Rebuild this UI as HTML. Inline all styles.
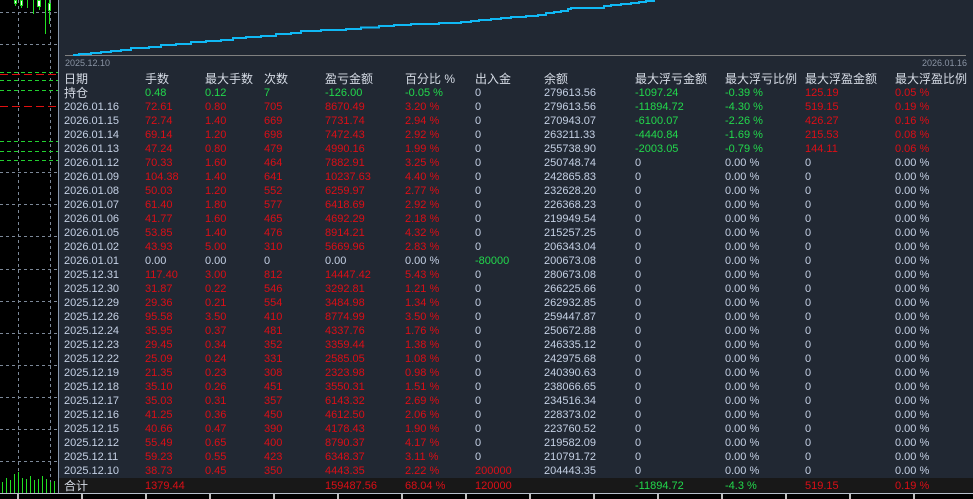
<!DOCTYPE html>
<html><head><meta charset="utf-8"><style>
*{margin:0;padding:0;box-sizing:border-box}
body{width:973px;height:499px;background:#000;position:relative;overflow:hidden;font-family:"Liberation Sans","Noto Sans CJK SC",sans-serif;font-size:11px}
#panel{position:absolute;left:58px;top:0;width:915px;height:493px;background:#212833;border-left:1px solid #8a98ac}
.r{position:absolute;left:0;width:915px;height:14px;line-height:14px;white-space:nowrap}
.r span{position:absolute;color:#dc0e16}
.r span:nth-child(1){left:5px;color:#c4d0e4}
.r span:nth-child(2){left:86px}
.r span:nth-child(3){left:146px}
.r span:nth-child(4){left:205px}
.r span:nth-child(5){left:266px}
.r span:nth-child(6){left:346px}
.r span:nth-child(7){left:416px;color:#c4d0e4}
.r span:nth-child(8){left:485px;color:#c4d0e4}
.r span:nth-child(9){left:576px;color:#c4d0e4}
.r span:nth-child(10){left:666px;color:#c4d0e4}
.r span:nth-child(11){left:746px;color:#c4d0e4}
.r span:nth-child(12){left:836px;color:#c4d0e4}
.r.h span{color:#d6dce6;font-size:12px}
.r span.gr{color:#22d84c}
.r span.rd{color:#dc0e16}
.r span.wt{color:#c4d0e4}
.r span.lb{color:#d6dce6;font-size:12px}
#tot{position:absolute;left:0;top:478px;width:915px;height:15px;background:#181818}
</style></head><body>
<svg width="58" height="499" style="position:absolute;left:0;top:0">
<g stroke="#7c8898" stroke-dasharray="3,3" stroke-width="1">
<line x1="18.5" y1="0" x2="18.5" y2="493"/><line x1="50.5" y1="0" x2="50.5" y2="493"/>
<line x1="0" y1="12.5" x2="58" y2="12.5"/><line x1="0" y1="44.5" x2="58" y2="44.5"/>
<line x1="0" y1="172.5" x2="58" y2="172.5"/><line x1="0" y1="204.5" x2="58" y2="204.5"/>
<line x1="0" y1="236.5" x2="58" y2="236.5"/><line x1="0" y1="269.5" x2="58" y2="269.5"/>
<line x1="0" y1="301.5" x2="58" y2="301.5"/><line x1="0" y1="333.5" x2="58" y2="333.5"/>
<line x1="0" y1="365.5" x2="58" y2="365.5"/><line x1="0" y1="397.5" x2="58" y2="397.5"/>
<line x1="0" y1="429.5" x2="58" y2="429.5"/><line x1="0" y1="461.5" x2="58" y2="461.5"/>
</g>
<g stroke="#22d030" stroke-dasharray="4,3">
<line x1="0" y1="72.5" x2="58" y2="72.5"/><line x1="0" y1="80.5" x2="58" y2="80.5"/>
<line x1="0" y1="90.5" x2="58" y2="90.5"/><line x1="0" y1="141.5" x2="58" y2="141.5"/>
<line x1="0" y1="151.5" x2="58" y2="151.5"/><line x1="0" y1="160.5" x2="58" y2="160.5"/>
</g>
<g stroke="#e01010" stroke-dasharray="8,4"><line x1="0" y1="74.5" x2="58" y2="74.5"/><line x1="0" y1="106.5" x2="58" y2="106.5"/></g>
<g stroke="#22e022"><line x1="2.5" y1="482" x2="2.5" y2="493"/><line x1="6.5" y1="478" x2="6.5" y2="493"/><line x1="10.5" y1="480" x2="10.5" y2="493"/><line x1="14.5" y1="474" x2="14.5" y2="493"/><line x1="18.5" y1="472" x2="18.5" y2="493"/><line x1="22.5" y1="478" x2="22.5" y2="493"/><line x1="26.5" y1="479" x2="26.5" y2="493"/><line x1="30.5" y1="476" x2="30.5" y2="493"/><line x1="34.5" y1="480" x2="34.5" y2="493"/><line x1="38.5" y1="479" x2="38.5" y2="493"/><line x1="42.5" y1="476" x2="42.5" y2="493"/><line x1="46.5" y1="479" x2="46.5" y2="493"/><line x1="50.5" y1="482" x2="50.5" y2="493"/><line x1="54.5" y1="481" x2="54.5" y2="493"/>
<line x1="15.5" y1="0" x2="15.5" y2="6"/><line x1="21.5" y1="0" x2="21.5" y2="8"/><line x1="27.5" y1="0" x2="27.5" y2="8"/><line x1="33.5" y1="0" x2="33.5" y2="14"/><line x1="39.5" y1="0" x2="39.5" y2="10"/><line x1="45.5" y1="0" x2="45.5" y2="34"/><line x1="49.5" y1="0" x2="49.5" y2="24"/></g>
<g fill="#fff" stroke="#22e022"><rect x="14.5" y="0.5" width="2" height="3"/><rect x="20.5" y="0.5" width="2" height="5"/><rect x="37.5" y="0.5" width="3" height="6"/><rect x="48.5" y="3.5" width="2" height="7"/></g>
</svg>
<div id="panel">
<svg width="915" height="70" style="position:absolute;left:0;top:0">
<line x1="6" y1="55.5" x2="907" y2="55.5" stroke="#808080"/>
<g transform="translate(-58,0)">
<polyline fill="none" stroke="#10b8f4" stroke-width="2" points="72,55 78,55 78,54 90,54 90,53 100,53 100,52 110,52 110,51 120,51 120,50 130,50 130,48 148,48 148,47 160,47 160,45 175,45 175,44 190,44 190,42 205,42 205,41 220,41 220,40 232,40 232,38 245,38 245,37 260,37 260,36 275,36 275,34 290,34 290,33 300,33 300,31 320,31 320,30 345,30 345,29 360,29 360,27.5 378,27.5 378,26 393,26 393,25 410,25 410,24 438,24 438,23 460,23 460,22 470,22 470,21 478,21 478,20 490,20 490,19 500,19 500,18 510,18 510,17 525,17 525,16 537,16 537,15 545,15 545,13 553,13 553,12 560,12 560,11 567,11 567,9 570,9 570,8 603,8 603,6 610,6 610,5 620,5 620,4 630,4 630,3 638,3 638,2 645,2 645,1 653,1 653,-1"/>
</g>
<text x="6" y="66" fill="#8a94a4" font-size="9" font-family="Liberation Sans">2025.12.10</text>
<text x="863" y="66" fill="#8a94a4" font-size="9" font-family="Liberation Sans">2026.01.16</text>
</svg>
<div class="r h" style="top:72px"><span>日期</span><span>手数</span><span>最大手数</span><span>次数</span><span>盈亏金额</span><span>百分比 %</span><span>出入金</span><span>余额</span><span>最大浮亏金额</span><span>最大浮亏比例</span><span>最大浮盈金额</span><span>最大浮盈比例</span></div>
<div class="r" style="top:86px"><span class="lb">持仓</span><span class="gr">0.48</span><span class="gr">0.12</span><span class="gr">7</span><span class="gr">-126.00</span><span class="gr">-0.05 %</span><span>0</span><span>279613.56</span><span class="gr">-1097.24</span><span class="gr">-0.39 %</span><span class="rd">125.19</span><span class="rd">0.05 %</span></div>
<div class="r" style="top:100px"><span>2026.01.16</span><span>72.61</span><span>0.80</span><span>705</span><span>8670.49</span><span>3.20 %</span><span>0</span><span>279613.56</span><span class="gr">-11894.72</span><span class="gr">-4.30 %</span><span class="rd">519.15</span><span class="rd">0.19 %</span></div>
<div class="r" style="top:114px"><span>2026.01.15</span><span>72.74</span><span>1.40</span><span>669</span><span>7731.74</span><span>2.94 %</span><span>0</span><span>270943.07</span><span class="gr">-6100.07</span><span class="gr">-2.26 %</span><span class="rd">426.27</span><span class="rd">0.16 %</span></div>
<div class="r" style="top:128px"><span>2026.01.14</span><span>69.14</span><span>1.20</span><span>698</span><span>7472.43</span><span>2.92 %</span><span>0</span><span>263211.33</span><span class="gr">-4440.84</span><span class="gr">-1.69 %</span><span class="rd">215.53</span><span class="rd">0.08 %</span></div>
<div class="r" style="top:142px"><span>2026.01.13</span><span>47.24</span><span>0.80</span><span>479</span><span>4990.16</span><span>1.99 %</span><span>0</span><span>255738.90</span><span class="gr">-2003.05</span><span class="gr">-0.79 %</span><span class="rd">144.11</span><span class="rd">0.06 %</span></div>
<div class="r" style="top:156px"><span>2026.01.12</span><span>70.33</span><span>1.60</span><span>464</span><span>7882.91</span><span>3.25 %</span><span>0</span><span>250748.74</span><span>0</span><span>0.00 %</span><span>0</span><span>0.00 %</span></div>
<div class="r" style="top:170px"><span>2026.01.09</span><span>104.38</span><span>1.40</span><span>641</span><span>10237.63</span><span>4.40 %</span><span>0</span><span>242865.83</span><span>0</span><span>0.00 %</span><span>0</span><span>0.00 %</span></div>
<div class="r" style="top:184px"><span>2026.01.08</span><span>50.03</span><span>1.20</span><span>552</span><span>6259.97</span><span>2.77 %</span><span>0</span><span>232628.20</span><span>0</span><span>0.00 %</span><span>0</span><span>0.00 %</span></div>
<div class="r" style="top:198px"><span>2026.01.07</span><span>61.40</span><span>1.80</span><span>577</span><span>6418.69</span><span>2.92 %</span><span>0</span><span>226368.23</span><span>0</span><span>0.00 %</span><span>0</span><span>0.00 %</span></div>
<div class="r" style="top:212px"><span>2026.01.06</span><span>41.77</span><span>1.60</span><span>465</span><span>4692.29</span><span>2.18 %</span><span>0</span><span>219949.54</span><span>0</span><span>0.00 %</span><span>0</span><span>0.00 %</span></div>
<div class="r" style="top:226px"><span>2026.01.05</span><span>53.85</span><span>1.40</span><span>476</span><span>8914.21</span><span>4.32 %</span><span>0</span><span>215257.25</span><span>0</span><span>0.00 %</span><span>0</span><span>0.00 %</span></div>
<div class="r" style="top:240px"><span>2026.01.02</span><span>43.93</span><span>5.00</span><span>310</span><span>5669.96</span><span>2.83 %</span><span>0</span><span>206343.04</span><span>0</span><span>0.00 %</span><span>0</span><span>0.00 %</span></div>
<div class="r" style="top:254px"><span>2026.01.01</span><span class="wt">0.00</span><span class="wt">0.00</span><span class="wt">0</span><span class="wt">0.00</span><span class="wt">0.00 %</span><span class="gr">-80000</span><span>200673.08</span><span>0</span><span>0.00 %</span><span>0</span><span>0.00 %</span></div>
<div class="r" style="top:268px"><span>2025.12.31</span><span>117.40</span><span>3.00</span><span>812</span><span>14447.42</span><span>5.43 %</span><span>0</span><span>280673.08</span><span>0</span><span>0.00 %</span><span>0</span><span>0.00 %</span></div>
<div class="r" style="top:282px"><span>2025.12.30</span><span>31.87</span><span>0.22</span><span>546</span><span>3292.81</span><span>1.21 %</span><span>0</span><span>266225.66</span><span>0</span><span>0.00 %</span><span>0</span><span>0.00 %</span></div>
<div class="r" style="top:296px"><span>2025.12.29</span><span>29.36</span><span>0.21</span><span>554</span><span>3484.98</span><span>1.34 %</span><span>0</span><span>262932.85</span><span>0</span><span>0.00 %</span><span>0</span><span>0.00 %</span></div>
<div class="r" style="top:310px"><span>2025.12.26</span><span>95.58</span><span>3.50</span><span>410</span><span>8774.99</span><span>3.50 %</span><span>0</span><span>259447.87</span><span>0</span><span>0.00 %</span><span>0</span><span>0.00 %</span></div>
<div class="r" style="top:324px"><span>2025.12.24</span><span>35.95</span><span>0.37</span><span>481</span><span>4337.76</span><span>1.76 %</span><span>0</span><span>250672.88</span><span>0</span><span>0.00 %</span><span>0</span><span>0.00 %</span></div>
<div class="r" style="top:338px"><span>2025.12.23</span><span>29.45</span><span>0.34</span><span>352</span><span>3359.44</span><span>1.38 %</span><span>0</span><span>246335.12</span><span>0</span><span>0.00 %</span><span>0</span><span>0.00 %</span></div>
<div class="r" style="top:352px"><span>2025.12.22</span><span>25.09</span><span>0.24</span><span>331</span><span>2585.05</span><span>1.08 %</span><span>0</span><span>242975.68</span><span>0</span><span>0.00 %</span><span>0</span><span>0.00 %</span></div>
<div class="r" style="top:366px"><span>2025.12.19</span><span>21.35</span><span>0.23</span><span>308</span><span>2323.98</span><span>0.98 %</span><span>0</span><span>240390.63</span><span>0</span><span>0.00 %</span><span>0</span><span>0.00 %</span></div>
<div class="r" style="top:380px"><span>2025.12.18</span><span>35.10</span><span>0.26</span><span>451</span><span>3550.31</span><span>1.51 %</span><span>0</span><span>238066.65</span><span>0</span><span>0.00 %</span><span>0</span><span>0.00 %</span></div>
<div class="r" style="top:394px"><span>2025.12.17</span><span>35.03</span><span>0.31</span><span>357</span><span>6143.32</span><span>2.69 %</span><span>0</span><span>234516.34</span><span>0</span><span>0.00 %</span><span>0</span><span>0.00 %</span></div>
<div class="r" style="top:408px"><span>2025.12.16</span><span>41.25</span><span>0.36</span><span>450</span><span>4612.50</span><span>2.06 %</span><span>0</span><span>228373.02</span><span>0</span><span>0.00 %</span><span>0</span><span>0.00 %</span></div>
<div class="r" style="top:422px"><span>2025.12.15</span><span>40.66</span><span>0.47</span><span>390</span><span>4178.43</span><span>1.90 %</span><span>0</span><span>223760.52</span><span>0</span><span>0.00 %</span><span>0</span><span>0.00 %</span></div>
<div class="r" style="top:436px"><span>2025.12.12</span><span>55.49</span><span>0.65</span><span>400</span><span>8790.37</span><span>4.17 %</span><span>0</span><span>219582.09</span><span>0</span><span>0.00 %</span><span>0</span><span>0.00 %</span></div>
<div class="r" style="top:450px"><span>2025.12.11</span><span>59.23</span><span>0.55</span><span>423</span><span>6348.37</span><span>3.11 %</span><span>0</span><span>210791.72</span><span>0</span><span>0.00 %</span><span>0</span><span>0.00 %</span></div>
<div class="r" style="top:464px"><span>2025.12.10</span><span>38.73</span><span>0.45</span><span>350</span><span>4443.35</span><span>2.22 %</span><span class="rd">200000</span><span>204443.35</span><span>0</span><span>0.00 %</span><span>0</span><span>0.00 %</span></div>
<div id="tot"><div class="r" style="top:1px"><span class="lb">合计</span><span>1379.44</span><span></span><span></span><span>159487.56</span><span>68.04 %</span><span class="rd">120000</span><span></span><span class="gr">-11894.72</span><span class="gr">-4.3 %</span><span class="rd">519.15</span><span class="rd">0.19 %</span></div></div>
</div>
<div style="position:absolute;left:0;top:493px;width:973px;height:1px;background:#b8c0cc"></div>
<svg width="973" height="6" style="position:absolute;left:0;top:493px"><g stroke="#fff" stroke-width="1.5"><line x1="18" y1="1" x2="18" y2="6"/><line x1="82" y1="1" x2="82" y2="6"/><line x1="146" y1="1" x2="146" y2="6"/><line x1="210" y1="1" x2="210" y2="6"/><line x1="274" y1="1" x2="274" y2="6"/><line x1="338" y1="1" x2="338" y2="6"/><line x1="402" y1="1" x2="402" y2="6"/><line x1="466" y1="1" x2="466" y2="6"/><line x1="530" y1="1" x2="530" y2="6"/><line x1="594" y1="1" x2="594" y2="6"/><line x1="658" y1="1" x2="658" y2="6"/><line x1="722" y1="1" x2="722" y2="6"/><line x1="786" y1="1" x2="786" y2="6"/><line x1="850" y1="1" x2="850" y2="6"/><line x1="914" y1="1" x2="914" y2="6"/></g></svg>
</body></html>
